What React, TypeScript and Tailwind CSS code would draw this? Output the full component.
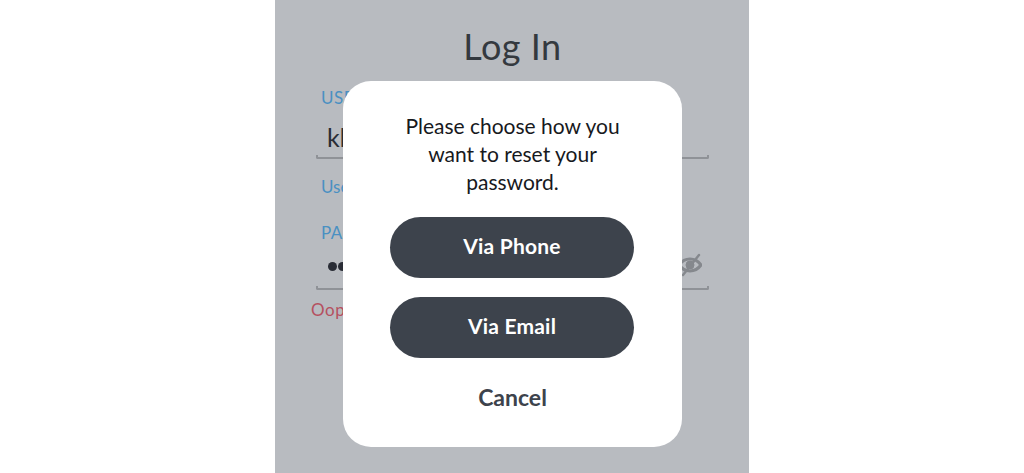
const FONT = "font-['Lato','Noto_Sans',sans-serif]"

function FieldLine() {
  return <div className="h-[4px] w-full rounded-b-[2px] border-x-2 border-b-2 border-[#8f9297]" />
}

function EyeSlash() {
  return (
    <svg viewBox="0 0 24 24" className="size-[24px]" fill="none" stroke="#85888d">
      <path d="M1 12c2.800-4 6.400-6 11-6s8.200 2 11 6c-2.800 4-6.400 6-11 6s-8.200-2-11-6z" strokeWidth="3.200" />
      <circle cx="12" cy="12" r="4" fill="#85888d" strokeWidth="1" />
      <path d="M5 22L21 2" strokeWidth="2.400" strokeLinecap="round" />
    </svg>
  )
}

function LoginForm() {
  return (
    <div className="flex h-full flex-col pl-[41px] pr-[40px]">
      <h1 className="mt-[25px] text-center text-[36px] leading-[42px] tracking-[0.5px] text-[#34393f]">Log In</h1>
      <p className="mt-[21px] pl-[5px] text-[17px] leading-5 tracking-[0.5px] text-[#4a90c2]">USERNAME</p>
      <p className="mt-[15px] pl-[11px] text-[25px] leading-7 text-[#2a2d36]">kk</p>
      <div className="mt-[4px]">
        <FieldLine />
      </div>
      <p className="mt-[18px] pl-[5px] text-[17px] leading-5 text-[#4a90c2]">Use</p>
      <p className="mt-[26px] pl-[5px] text-[17px] leading-5 tracking-[0.5px] text-[#4a90c2]">PASSWORD</p>
      <div className="mt-[10px] mb-[9px] flex h-[24px] items-center justify-between pl-[12px] pr-[7px]">
        <div className="mt-[3px] flex gap-[1px]">
          <span className="size-[9px] rounded-full bg-[#2a2d36]" />
          <span className="size-[9px] rounded-full bg-[#2a2d36]" />
        </div>
        <EyeSlash />
      </div>
      <div>
        <FieldLine />
      </div>
      <p className="mt-[10px] -ml-[5px] text-[17px] leading-5 tracking-[0.5px] text-[#b5505f]">Oops</p>
    </div>
  )
}

function ResetDialog() {
  return (
    <div className="absolute left-[68px] top-[81px] flex h-[366px] w-[339px] flex-col items-center rounded-[28px] bg-white">
      <p className="mt-[31px] w-[250px] text-center text-[21px] leading-[28px] text-[#17191d]">
        Please choose how you want to reset your password.
      </p>
      <button
        type="button"
        className="mt-[21px] ml-[47px] h-[61px] w-[244px] self-start rounded-full bg-[#3d434c] pb-[3px] text-[21px] font-bold tracking-[0.2px] text-white"
      >
        Via Phone
      </button>
      <button
        type="button"
        className="mt-[19px] ml-[47px] h-[61px] w-[244px] self-start rounded-full bg-[#3d434c] pb-[3px] text-[21px] font-bold tracking-[0.2px] text-white"
      >
        Via Email
      </button>
      <button type="button" className="mt-[25px] text-[23px] leading-[28px] font-bold text-[#3d434c]">
        Cancel
      </button>
    </div>
  )
}

export default function App() {
  return (
    <div className={`flex h-[473px] w-full justify-center overflow-hidden bg-white ${FONT}`}>
      <div className="relative h-full w-[474px] bg-[#b8bbc0]">
        <LoginForm />
        <ResetDialog />
      </div>
    </div>
  )
}
